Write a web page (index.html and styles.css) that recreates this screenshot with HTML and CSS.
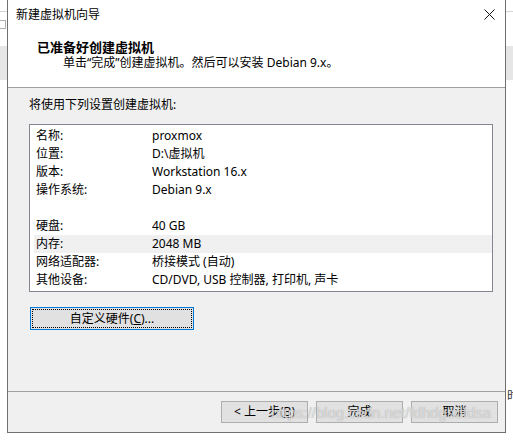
FILE: index.html
```html
<!DOCTYPE html>
<html lang="zh-CN">
<head>
<meta charset="utf-8">
<title>新建虚拟机向导</title>
<link rel="stylesheet" href="styles.css">
</head>
<body>
<div class="desktop">
  <div class="bg-top">
    <div class="bg-line"></div>
    <div class="bg-icon"></div>
  </div>
  <div class="bg-band"></div>
  <div class="bg-rest"><span class="bg-char">时</span></div>

  <div class="dialog">
    <div class="titlebar">
      <span class="title">新建虚拟机向导</span>
      <svg class="close" width="11" height="11" viewBox="0 0 11 11"><path d="M0.5 0.5 L10.5 10.5 M10.5 0.5 L0.5 10.5" stroke="#111" stroke-width="1" fill="none"/></svg>
    </div>
    <div class="header">
      <div class="h-title">已准备好创建虚拟机</div>
      <div class="h-sub">单击“完成”创建虚拟机。然后可以安装 Debian 9.x。</div>
    </div>
    <div class="body">
      <div class="intro">将使用下列设置创建虚拟机:</div>
      <div class="listbox">
        <div class="row"><span class="k">名称:</span><span class="v">proxmox</span></div>
        <div class="row"><span class="k">位置:</span><span class="v">D:\虚拟机</span></div>
        <div class="row"><span class="k">版本:</span><span class="v">Workstation 16.x</span></div>
        <div class="row"><span class="k">操作系统:</span><span class="v">Debian 9.x</span></div>
        <div class="row"></div>
        <div class="row"><span class="k">硬盘:</span><span class="v">40 GB</span></div>
        <div class="row sel"><span class="k">内存:</span><span class="v">2048 MB</span></div>
        <div class="row"><span class="k">网络适配器:</span><span class="v">桥接模式 (自动)</span></div>
        <div class="row"><span class="k">其他设备:</span><span class="v">CD/DVD, USB 控制器, 打印机, 声卡</span></div>
      </div>
      <div class="custom-wrap">
        <button class="btn custom"><span class="focus">自定义硬件(<u>C</u>)...</span></button>
      </div>
    </div>
    <div class="footer">
      <button class="btn">&lt; 上一步(<u>B</u>)</button>
      <button class="btn">完成</button>
      <button class="btn">取消</button>
    </div>
    <div class="watermark">https://blog.csdn.net/fdhdgsdfdsa</div>
  </div>
</div>
</body>
</html>
```
FILE: styles.css
```css
* { box-sizing: border-box; }
html, body {
  margin: 0;
  padding: 0;
  background: #ffffff;
}
body {
  font-family: "Noto Sans", "Noto Sans CJK SC", sans-serif;
  font-size: 12px;
  color: #000;
}
.desktop {
  position: relative;
  width: 513px;
  height: 440px;
  overflow: hidden;
}
.bg-top {
  height: 46px;
  position: relative;
}
.bg-line {
  position: absolute;
  left: 0;
  right: 0;
  top: 11px;
  height: 1px;
  background: #d4d4d4;
}
.bg-icon {
  position: absolute;
  left: -4px;
  top: 20px;
  width: 10px;
  height: 9px;
  border: 1px solid #b0b0b0;
}
.bg-band {
  height: 34px;
  background: #e6e6e6;
}
.bg-rest {
  height: 360px;
  position: relative;
}
.bg-char {
  position: absolute;
  left: 507px;
  top: 308px;
  font-size: 12px;
  line-height: 16px;
  color: #333;
}

.dialog {
  position: absolute;
  left: 7px;
  top: 0;
  width: 499px;
  height: 433px;
  border: 1px solid #6f6f6f;
  border-top: none;
  background: #f0f0f0;
  display: flex;
  flex-direction: column;
}
.titlebar {
  height: 30px;
  background: #fff;
  display: flex;
  align-items: center;
  justify-content: space-between;
  padding: 0 10px 0 8px;
}
.title {
  line-height: 16px;
}
.close { display: block; margin-top: -1px; }
.header {
  height: 58px;
  background: #fff;
  padding: 9px 0 0 29px;
  border-bottom: 1px solid #a0a0a0;
}
.h-title {
  font-weight: bold;
  font-size: 13px;
  line-height: 16px;
}
.h-sub {
  line-height: 16px;
  padding-left: 26px;
}
.body {
  height: 304px;
  padding: 9px 12px 0 21px;
  border-bottom: 1px solid #a0a0a0;
}
.intro {
  line-height: 16px;
}
.listbox {
  margin-top: 11px;
  height: 168px;
  background: #fff;
  border: 1px solid #828790;
  padding: 2px 0 0 4px;
}
.row {
  height: 18px;
  line-height: 18px;
  display: flex;
  padding-left: 2px;
}
.row.sel { background: #f0f0f0; }
.k { width: 116px; flex: none; }
.v { white-space: nowrap; }

.custom-wrap {
  margin-top: 15px;
  padding-left: 1px;
}
.btn {
  font-family: inherit;
  font-size: 12px;
  color: #000;
  background: #e1e1e1;
  border: 1px solid #adadad;
  margin: 0;
  padding: 0;
  height: 22px;
  width: 87px;
  line-height: 18px;
  cursor: default;
}
.btn.custom {
  width: 164px;
  height: 23px;
  border-color: #0078d7;
  padding: 1px;
  display: block;
}
.focus {
  display: block;
  height: 100%;
  border: 1px dotted #000;
  line-height: 17px;
}
.footer {
  flex: 1;
  display: flex;
  justify-content: flex-end;
  align-items: flex-start;
  gap: 8px;
  padding: 9px 7px 0 0;
}
.watermark {
  position: absolute;
  left: 263px;
  top: 404px;
  font-family: "Liberation Sans", sans-serif;
  font-size: 15px;
  line-height: 18px;
  color: rgba(255, 255, 255, 0.6);
  text-shadow: 0 0 1px rgba(140, 140, 140, 0.9);
  white-space: nowrap;
  pointer-events: none;
}
```
